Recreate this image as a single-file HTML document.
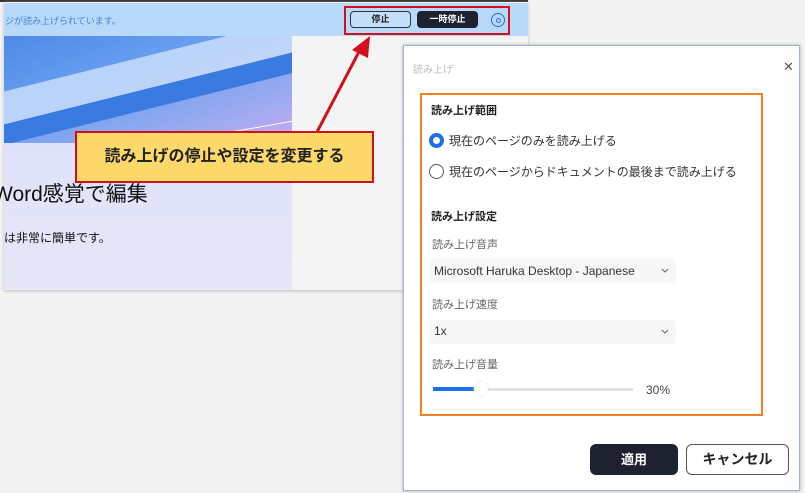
<!DOCTYPE html>
<html><head><meta charset="utf-8"><style>
*{margin:0;padding:0;box-sizing:border-box}
body{width:805px;height:493px;overflow:hidden;background:#f3f3f3;font-family:"Liberation Sans","Noto Sans CJK JP",sans-serif;position:relative}
.abs{position:absolute}
</style></head><body>
<div class="abs" style="left:0;top:0;width:528px;height:2px;background:#333"></div>
<div class="abs" style="left:4px;top:2px;width:524px;height:288px;background:#f4f4f4;box-shadow:0 1px 3px #bbb"></div>
<div class="abs" style="left:4px;top:3px;width:524px;height:33px;background:#b8d9fa"></div>
<div class="abs" style="left:5px;top:14px;font-size:9px;color:#4a7fd0">ジが読み上げられています。</div>
<div class="abs" style="left:344px;top:6px;width:166px;height:29px;border:2px solid #d0101c"></div>
<div class="abs" style="left:350px;top:11px;width:61px;height:17px;border:1px solid #333;border-radius:4px;background:#c6dff8;font-size:9px;font-weight:bold;text-align:center;line-height:15px;color:#222">停止</div>
<div class="abs" style="left:417px;top:11px;width:61px;height:17px;border-radius:4px;background:#1e2230;font-size:9px;font-weight:bold;text-align:center;line-height:17px;color:#fff">一時停止</div>
<div class="abs" style="left:491px;top:13px;width:14px;height:14px;border:1.5px solid #2a6fe0;border-radius:50%"></div>
<div class="abs" style="left:496px;top:18px;width:5px;height:5px;border:1.5px solid #2a6fe0;border-radius:50%"></div>
<div class="abs" style="left:4px;top:36px;width:288px;height:107px;background:linear-gradient(160deg,#4d8ae8 0%,#6aa0f0 40%,#9aaaf0 75%,#c9a8f4 100%);overflow:hidden">
 <div class="abs" style="left:-20px;top:20px;width:330px;height:40px;background:#cfe1fb;transform:rotate(-14deg);opacity:.8"></div>
 <div class="abs" style="left:-10px;top:50px;width:330px;height:20px;background:#3b7ae0;transform:rotate(-14deg)"></div>
 <div class="abs" style="left:130px;top:95px;width:200px;height:1px;background:#fff;transform:rotate(-10deg)"></div>
</div>
<div class="abs" style="left:4px;top:143px;width:288px;height:146px;background:linear-gradient(180deg,#dfe3fa,#e6e6f8)"></div>
<div class="abs" style="left:-7px;top:178px;font-size:21px;color:#111">Word感覚で編集</div>
<div class="abs" style="left:4px;top:229px;font-size:12px;color:#111">は非常に簡単です。</div>
<svg class="abs" style="left:300px;top:30px" width="80" height="110"><line x1="17" y1="102" x2="62" y2="16" stroke="#d0101c" stroke-width="3"/><polygon points="70,6 68,28 52,20" fill="#d0101c"/></svg>
<div class="abs" style="left:75px;top:131px;width:299px;height:52px;background:#fcd96a;border:2px solid #d0101c;font-size:16px;font-weight:bold;color:#222;text-align:center;line-height:47px">読み上げの停止や設定を変更する</div>
<div class="abs" style="left:403px;top:45px;width:397px;height:446px;background:#fff;border:1px solid #9fb6d8;box-shadow:0 0 3px #aaa"></div>
<div class="abs" style="left:413px;top:61px;font-size:10px;color:#bbb">読み上げ</div>
<div class="abs" style="left:783px;top:59px;font-size:13px;color:#555">✕</div>
<div class="abs" style="left:420px;top:93px;width:343px;height:323px;border:2px solid #f58220"></div>
<div class="abs" style="left:431px;top:102px;font-size:11px;font-weight:bold;color:#222">読み上げ範囲</div>
<div class="abs" style="left:429px;top:133px;width:15px;height:15px;border-radius:50%;border:4.5px solid #1f6fe8;background:#fff"></div>
<div class="abs" style="left:449px;top:132px;font-size:12px;color:#333">現在のページのみを読み上げる</div>
<div class="abs" style="left:429px;top:164px;width:15px;height:15px;border-radius:50%;border:1.5px solid #555"></div>
<div class="abs" style="left:449px;top:163px;font-size:12px;color:#333">現在のページからドキュメントの最後まで読み上げる</div>
<div class="abs" style="left:431px;top:208px;font-size:11px;font-weight:bold;color:#222">読み上げ設定</div>
<div class="abs" style="left:432px;top:236px;font-size:11px;color:#666">読み上げ音声</div>
<div class="abs" style="left:429px;top:259px;width:247px;height:24px;background:#f7f7f7;border-radius:4px"></div>
<div class="abs" style="left:434px;top:264px;font-size:12px;color:#333">Microsoft Haruka Desktop - Japanese</div>
<svg class="abs" style="left:661px;top:268px" width="8" height="6"><polyline points="1,1 4,4 7,1" fill="none" stroke="#666" stroke-width="1"/></svg>
<div class="abs" style="left:432px;top:296px;font-size:11px;color:#666">読み上げ速度</div>
<div class="abs" style="left:429px;top:320px;width:247px;height:24px;background:#f7f7f7;border-radius:4px"></div>
<div class="abs" style="left:434px;top:324px;font-size:12px;color:#333">1x</div>
<svg class="abs" style="left:661px;top:329px" width="8" height="6"><polyline points="1,1 4,4 7,1" fill="none" stroke="#666" stroke-width="1"/></svg>
<div class="abs" style="left:432px;top:356px;font-size:11px;color:#666">読み上げ音量</div>
<div class="abs" style="left:433px;top:388px;width:200px;height:3px;background:#e3e3e3"></div>
<div class="abs" style="left:433px;top:387px;width:41px;height:4px;background:#1f6fe8"></div>
<div class="abs" style="left:474px;top:382px;width:14px;height:14px;border-radius:50%;background:#fff;box-shadow:0 0 2px #ddd"></div>
<div class="abs" style="left:646px;top:383px;font-size:12px;color:#444">30%</div>
<div class="abs" style="left:590px;top:444px;width:88px;height:31px;background:#1e2230;border-radius:6px;color:#fff;font-size:13px;font-weight:bold;text-align:center;line-height:31px">適用</div>
<div class="abs" style="left:686px;top:444px;width:103px;height:31px;border:1.5px solid #555;border-radius:6px;color:#222;font-size:14px;font-weight:bold;text-align:center;line-height:28px">キャンセル</div>
</body></html>
